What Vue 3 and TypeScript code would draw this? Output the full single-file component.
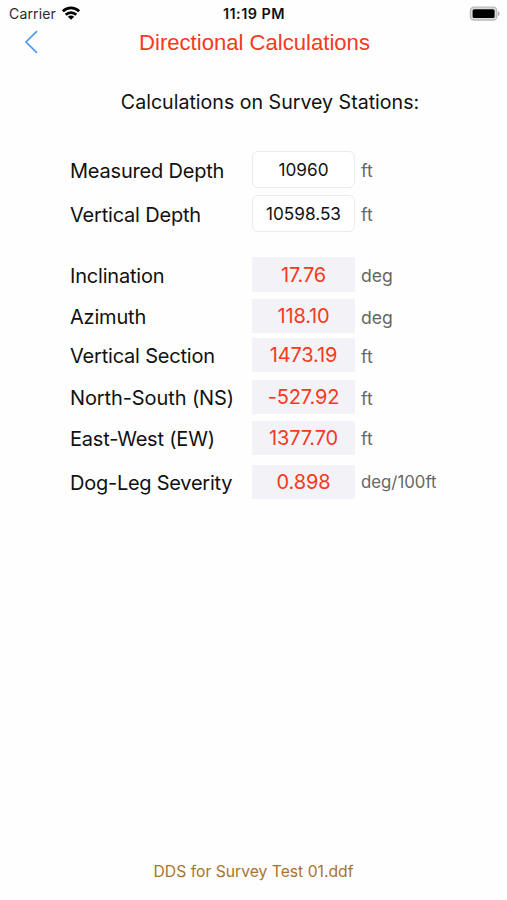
<script setup lang="ts">
interface Row {
  id: string
  label: string
  value: string
  unit: string
}

const inputs: Row[] = [
  { id: 'md', label: 'Measured Depth', value: '10960', unit: 'ft' },
  { id: 'tvd', label: 'Vertical Depth', value: '10598.53', unit: 'ft' },
]

const results: Row[] = [
  { id: 'inc', label: 'Inclination', value: '17.76', unit: 'deg' },
  { id: 'azi', label: 'Azimuth', value: '118.10', unit: 'deg' },
  { id: 'vs', label: 'Vertical Section', value: '1473.19', unit: 'ft' },
  { id: 'ns', label: 'North-South (NS)', value: '-527.92', unit: 'ft' },
  { id: 'ew', label: 'East-West (EW)', value: '1377.70', unit: 'ft' },
  { id: 'dls', label: 'Dog-Leg Severity', value: '0.898', unit: 'deg/100ft' },
]
</script>

<template>
  <div class="screen">
    <header class="status">
      <div class="carrier">
        <span>Carrier</span>
        <svg class="wifi" viewBox="0 0 18 14" width="18" height="14">
          <g fill="none" stroke="#000" stroke-width="2.7">
            <path d="M0.9 5.3C5.5 0.8 12.5 0.8 17.1 5.3" />
            <path d="M3.7 8.7C6.7 5.8 11.3 5.8 14.3 8.7" />
          </g>
          <path d="M9 13.8L5.8 10.7C7.5 9.2 10.5 9.2 12.2 10.7Z" />
        </svg>
      </div>
      <div class="clock">11:19 PM</div>
      <svg class="battery" viewBox="0 0 32 16" width="32" height="16">
        <rect x="1.4" y="1.2" width="26.4" height="12.8" rx="3.6" fill="#dcdcdc" stroke="#b9b9b9" stroke-width="1.3" />
        <rect x="3.6" y="3.2" width="22" height="8.8" rx="1.6" />
        <path d="M29 5.2C31.2 6 31.2 9.2 29 10Z" fill="#b0b0b0" />
      </svg>
    </header>

    <nav class="nav">
      <button class="back" aria-label="Back">
        <svg viewBox="0 0 14 24" width="14" height="24">
          <path d="M13 1.2L2 12L13 22.8" fill="none" stroke="#4a9bee" stroke-width="1.7" />
        </svg>
      </button>
      <h1>Directional Calculations</h1>
    </nav>

    <h2>Calculations on Survey Stations:</h2>

    <main>
      <div v-for="r in inputs" :key="r.id" class="row input" :class="r.id">
        <span class="label">{{ r.label }}</span>
        <div class="field">{{ r.value }}</div>
        <span class="unit">{{ r.unit }}</span>
      </div>
      <div v-for="r in results" :key="r.id" class="row result" :class="r.id">
        <span class="label">{{ r.label }}</span>
        <output>{{ r.value }}</output>
        <span class="unit">{{ r.unit }}</span>
      </div>
    </main>

    <footer>DDS for Survey Test 01.ddf</footer>
  </div>
</template>

<style>
body {
  background: #fefefe;
}
</style>

<style scoped>
.screen {
  display: flex;
  flex-direction: column;
  box-sizing: border-box;
  height: 900px;
  font-family: Inter, "Liberation Sans", sans-serif;
  color: #111;
  background: #fefefe;
}
.status {
  display: grid;
  grid-template-columns: 1fr auto 1fr;
  align-items: center;
  height: 27px;
  padding: 0 6px 0 9px;
  font-size: 14px;
}
.carrier {
  display: flex;
  align-items: center;
  gap: 6px;
  color: #2a2a2a;
  letter-spacing: 0.15px;
}
.wifi {
  margin-top: -1px;
}
.clock {
  font-size: 14.4px;
  font-weight: 600;
  letter-spacing: 0.5px;
  padding-right: 2px;
}
.battery {
  justify-self: end;
}
.nav {
  display: grid;
  grid-template-columns: 48px 1fr 48px;
  align-items: start;
  height: 30px;
}
.back {
  display: flex;
  padding: 3px 0 0 24px;
  border: 0;
  background: none;
}
h1 {
  margin: 0;
  text-align: center;
  font: 400 22.1px/30px "Liberation Sans", Arial, sans-serif;
  color: #f7391c;
  padding: 1px 0 0 2px;
}
h2 {
  margin: 30px 0 0 33px;
  text-align: center;
  font-size: 19.6px;
  font-weight: 400;
  line-height: 30px;
}
main {
  display: flex;
  flex-direction: column;
  padding: 34px 0 0 70px;
}
.row {
  display: grid;
  grid-template-columns: 182px 103px auto;
  align-items: center;
  height: 34px;
}
.label {
  font-size: 20px;
  letter-spacing: -0.2px;
  white-space: nowrap;
}
.row .label {
  padding-top: 2px;
}
.input {
  height: 37px;
}
.field {
  box-sizing: border-box;
  height: 37px;
  line-height: 36px;
  border: 1px solid #ebebed;
  border-radius: 6px;
  text-align: center;
  font-size: 17.2px;
  background: #fff;
}
output {
  align-self: stretch;
  display: grid;
  place-items: center;
  background: #f2f2f7;
  color: #f7391c;
  font-size: 20px;
  letter-spacing: -0.15px;
}
.unit {
  padding: 2px 0 0 6px;
  font-size: 17.6px;
  color: #666;
}
.tvd { margin-top: 7px; }
.inc { margin-top: 25px; height: 35px; }
.azi { margin-top: 7px; }
.vs { margin-top: 5px; }
.ns { margin-top: 8px; }
.ns .label { letter-spacing: -0.1px; }
.ew { margin-top: 7px; }
.dls { margin-top: 10px; }
.ew .unit { padding-top: 0; }
.dls .label { letter-spacing: -0.25px; }
.dls .unit { padding-top: 0; font-size: 16.8px; }
footer {
  margin-top: auto;
  padding-bottom: 18px;
  text-align: center;
  font-size: 15.7px;
  line-height: 20px;
  color: #a9732f;
}
</style>
